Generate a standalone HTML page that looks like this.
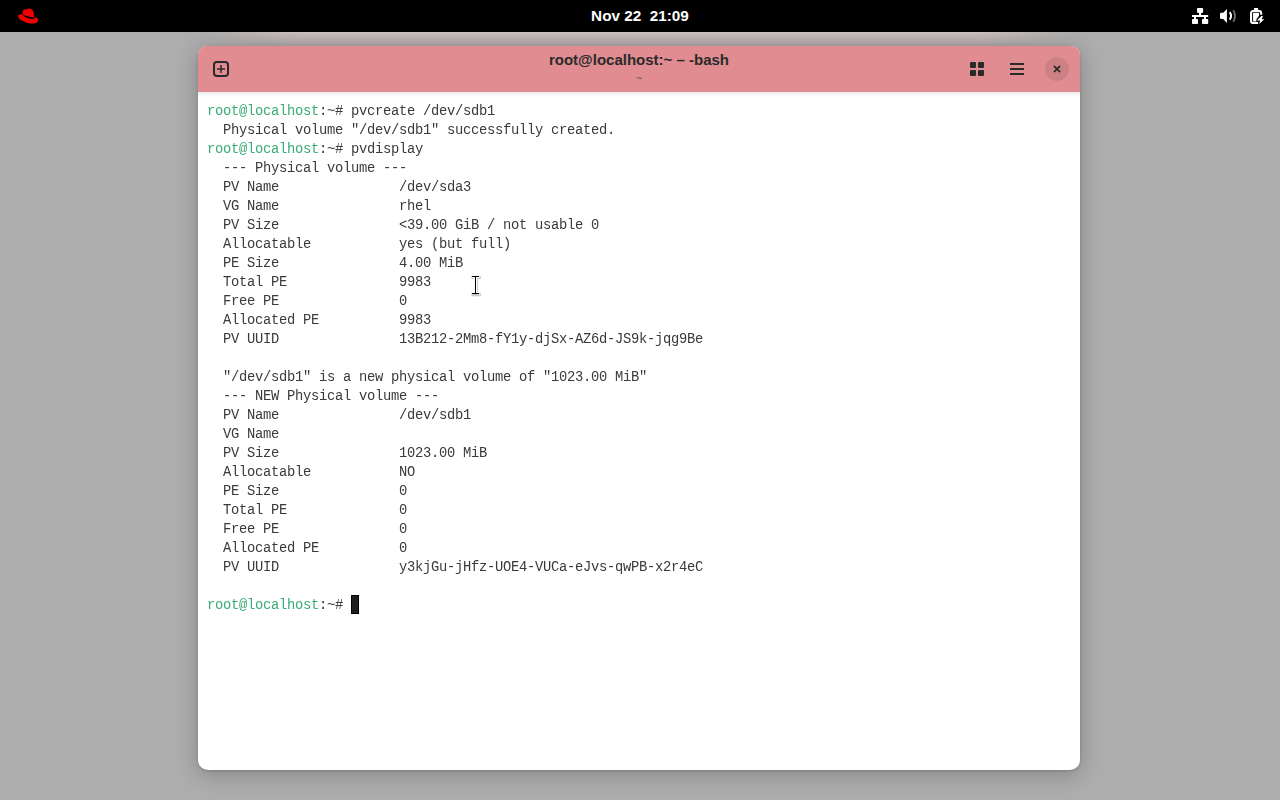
<!DOCTYPE html>
<html><head><meta charset="utf-8">
<style>
html,body{margin:0;padding:0;width:1280px;height:800px;overflow:hidden;background:#adadad;}
body{position:relative;font-family:"Liberation Sans",sans-serif;}
#topbar{position:absolute;left:0;top:0;width:1280px;height:32px;background:#000;}
#clock{position:absolute;left:0;width:1280px;top:0;height:32px;line-height:31px;text-align:center;color:#fff;font-weight:bold;font-size:15.3px;}
#win{position:absolute;left:198px;top:46px;width:882px;height:724px;background:#fff;border-radius:9px 9px 10px 10px;box-shadow:0 1px 3px rgba(0,0,0,0.14),0 4px 22px rgba(0,0,0,0.24);overflow:hidden;}
#hdr{position:absolute;left:0;top:0;width:882px;height:46px;background:#e08c91;}
#title{position:absolute;left:0;width:882px;top:5px;text-align:center;font-weight:bold;font-size:15px;color:#2a2a2a;}
#sub{position:absolute;left:0;width:882px;top:26px;text-align:center;font-size:11px;color:#555;}
#term{position:absolute;left:9px;top:56px;font-family:"Liberation Mono",monospace;font-size:13.8px;letter-spacing:-0.2813px;line-height:19px;color:#3a3a3a;white-space:pre;will-change:transform;}
.g{color:#3aaa75;}
.cur{display:inline-block;width:8px;height:19px;box-sizing:border-box;background:#1e1e1e;border:1px solid #000;vertical-align:top;margin-top:-1px;}
svg{position:absolute;}
</style></head><body>
<div id="topbar">
<svg style="left:14px;top:4px" width="28" height="24" viewBox="0 0 28 24"><path d="M8.4 10 C8.6 7.5 9 5.5 10.5 5.2 C11.5 5 12 5.6 12.6 5.5 C13.3 5.3 13.8 4.5 14.8 4.5 C17.5 4.6 19 5.5 19.6 8.5 L20.2 12.2 C20.3 13 19.8 13.3 18.6 13.2 C14 12.9 10 11.5 8.4 10 Z" fill="#ee0000"/><path d="M4 12 C4 10.8 5.5 10.2 8.2 10.2 C9.8 12.6 14 14.5 18.5 14.9 C20.3 15 20.9 14.3 20.8 13.2 C22.8 13.2 24.2 14.5 24.2 16 C24.2 18.5 21.5 19.6 18.5 19.6 C12 19.6 4 15.5 4 12 Z" fill="#ee0000"/></svg>
<div id="clock">Nov 22&nbsp;&nbsp;21:09</div>
<svg style="left:1192px;top:8px" width="17" height="17" viewBox="0 0 17 17" fill="#fff"><rect x="5" y="0" width="6.1" height="4.9" rx="0.8"/><rect x="7" y="4" width="2.1" height="4"/><rect x="0" y="6.9" width="16.2" height="2.2" rx="0.4"/><rect x="2" y="8" width="2" height="4"/><rect x="12" y="8" width="2" height="4"/><rect x="0" y="11" width="6" height="5.1" rx="0.8"/><rect x="10" y="11" width="6.2" height="5.1" rx="0.8"/></svg>
<svg style="left:1220px;top:8px" width="17" height="16" viewBox="0 0 17 16"><path d="M6.9 0.9 L6.9 15.1 L3.2 11 L1.2 11 C0.5 11 0 10.5 0 9.8 L0 6 C0 5.3 0.5 4.8 1.2 4.8 L3.2 4.8 Z" fill="#fff"/><path d="M9.6 4.3 C11.6 6.3 11.6 9.6 9.6 11.6" stroke="#fff" stroke-width="2" fill="none"/><path d="M13.2 2.3 C15.6 5.5 15.6 10.5 13.2 13.7" stroke="#707070" stroke-width="1.8" fill="none"/></svg>
<svg style="left:1246px;top:4px" width="24" height="24" viewBox="0 0 24 24" fill="#fff"><rect x="7.95" y="3.9" width="4.2" height="2.6" rx="0.4"/><path d="M15.15 10.65 L15.15 9.2 C15.15 7.8 14.5 7.05 13.1 7.05 L7.1 7.05 C5.7 7.05 5.05 7.8 5.05 9.2 L5.05 16.9 C5.05 18.3 5.7 18.95 7.1 18.95 L12.15 18.95" stroke="#fff" stroke-width="2.1" fill="none"/><path d="M7.05 8.85 L13.05 8.85 L13.05 11.7 L10.35 15.6 L10.35 17.4 L7.05 17.4 Z"/><path d="M15.4 12 L17 12 L15.7 15.3 L18.3 15.3 L13.2 20.1 L14.1 16.6 L10.9 16.6 Z"/></svg>
</div>

<div style="position:absolute;left:198px;top:32px;width:882px;height:14px;background:linear-gradient(to bottom,#d2c4c4 0px,#c6b9b9 3px,#bcb1b1 8px,#ada6a6 14px);-webkit-mask-image:linear-gradient(to right,transparent 0,#000 12%,#000 88%,transparent 100%);"></div>
<div id="win">
<div id="hdr">
<svg style="left:15px;top:15px" width="16" height="16" viewBox="0 0 16 16"><rect x="1" y="1" width="14" height="14" rx="3" stroke="#2a2a2a" stroke-width="2" fill="none"/><rect x="7.25" y="4" width="1.5" height="8" fill="#2a2a2a"/><rect x="4" y="7.25" width="8" height="1.5" fill="#2a2a2a"/></svg>
<div id="title">root@localhost:~ – -bash</div>
<div id="sub">~</div>
<svg style="left:772px;top:16px" width="14" height="14" viewBox="0 0 14 14" fill="#2a2a2a"><rect x="0" y="0" width="6" height="6" rx="1"/><rect x="8" y="0" width="6" height="6" rx="1"/><rect x="0" y="8" width="6" height="6" rx="1"/><rect x="8" y="8" width="6" height="6" rx="1"/></svg>
<svg style="left:812px;top:17px" width="14" height="12" viewBox="0 0 14 12" fill="#2a2a2a"><rect x="0" y="0" width="14" height="2"/><rect x="0" y="5" width="14" height="2"/><rect x="0" y="10" width="14" height="2"/></svg>
<div style="position:absolute;left:847px;top:11px;width:24px;height:24px;border-radius:12px;background:rgba(0,0,0,0.08);"></div>
<svg style="left:855px;top:19px" width="8" height="8" viewBox="0 0 8 8"><path d="M0.9 0.9 L7.1 7.1 M7.1 0.9 L0.9 7.1" stroke="#2a2a2a" stroke-width="1.7"/></svg>
</div>
<div style="position:absolute;left:0;top:46px;width:882px;height:6px;background:linear-gradient(to bottom,rgba(30,60,60,0.09),rgba(30,60,60,0.03) 50%,rgba(30,60,60,0));"></div>
<div id="term"><span class="g">root@localhost</span>:~# pvcreate /dev/sdb1
  Physical volume "/dev/sdb1" successfully created.
<span class="g">root@localhost</span>:~# pvdisplay
  --- Physical volume ---
  PV Name               /dev/sda3
  VG Name               rhel
  PV Size               &lt;39.00 GiB / not usable 0
  Allocatable           yes (but full)
  PE Size               4.00 MiB
  Total PE              9983
  Free PE               0
  Allocated PE          9983
  PV UUID               13B212-2Mm8-fY1y-djSx-AZ6d-JS9k-jqg9Be

  "/dev/sdb1" is a new physical volume of "1023.00 MiB"
  --- NEW Physical volume ---
  PV Name               /dev/sdb1
  VG Name
  PV Size               1023.00 MiB
  Allocatable           NO
  PE Size               0
  Total PE              0
  Free PE               0
  Allocated PE          0
  PV UUID               y3kjGu-jHfz-UOE4-VUCa-eJvs-qwPB-x2r4eC

<span class="g">root@localhost</span>:~# <span class="cur"></span></div>
</div>
<svg style="left:466px;top:272px" width="20" height="26" viewBox="0 0 20 26"><g fill="none" stroke-linecap="round" stroke-linejoin="round"><path d="M6.2 4.4 L12.8 4.4 M9.5 4.9 L9.5 21.1 M6.2 21.6 L12.8 21.6" stroke="rgba(0,0,0,0.25)" stroke-width="3.6" transform="translate(0.6,0.8)"/><path d="M6.2 4.4 L12.8 4.4 M9.5 4.9 L9.5 21.1 M6.2 21.6 L12.8 21.6" stroke="#fff" stroke-width="3.4"/><path d="M6.2 4.4 L12.8 4.4 M9.5 4.9 L9.5 21.1 M6.2 21.6 L12.8 21.6" stroke="#000" stroke-width="1.05"/></g></svg>
</body></html>
